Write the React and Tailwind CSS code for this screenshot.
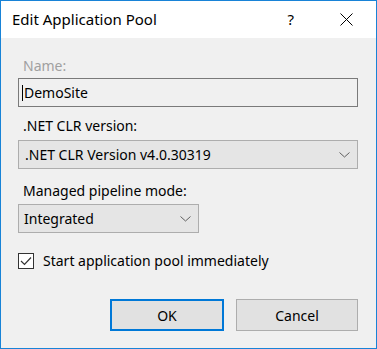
const Chevron = () => (
  <svg width="11" height="6" viewBox="0 0 11 6" className="shrink-0">
    <path d="M0.5 0.5 L5.5 5 L10.5 0.5" fill="none" stroke="#5f5f5f" strokeWidth="1" />
  </svg>
);

const App = () => {
  const font = { fontFamily: '"Noto Sans", "Liberation Sans", sans-serif' };

  return (
    <div
      className="flex h-[349px] w-[377px] flex-col border border-[#1883d7] bg-[#f0f0f0] text-[14px] leading-[19px] text-black"
      style={font}
    >
      <div className="flex h-[37px] shrink-0 items-center bg-white">
        <span className="ml-[11px] text-[15px] leading-none">Edit Application Pool</span>
        <span className="ml-auto mr-[46px] text-[15px] leading-none">?</span>
        <svg width="13" height="13" viewBox="0 0 13 13" className="mr-[23px]">
          <path d="M0.5 0.5 L12.5 12.5 M12.5 0.5 L0.5 12.5" stroke="#000" strokeWidth="1" />
        </svg>
      </div>

      <div className="flex flex-1 flex-col pl-[17px]">
        <label className="mt-[18px] h-[19px] pl-[5px] text-[#a0a0a0]">Name:</label>
        <div className="mt-[3px] flex h-[29px] w-[340px] items-center border border-[#7a7a7a] bg-[#f0f0f0] pl-[3px]">
          <span className="mr-[1px] h-[16px] w-px bg-black" />
          <span>DemoSite</span>
        </div>

        <label className="mt-[9px] h-[19px] pl-[5px]">.NET CLR version:</label>
        <div className="mt-[5px] flex h-[29px] w-[340px] items-center border border-[#adadad] bg-[#e5e5e5] pl-[6px] pr-[7px]">
          <span>.NET CLR Version v4.0.30319</span>
          <span className="ml-auto">
            <Chevron />
          </span>
        </div>

        <label className="mt-[12px] h-[19px] pl-[5px]">Managed pipeline mode:</label>
        <div className="mt-[4px] flex h-[29px] w-[181px] items-center border border-[#adadad] bg-[#e5e5e5] pl-[5px] pr-[7px]">
          <span>Integrated</span>
          <span className="ml-auto">
            <Chevron />
          </span>
        </div>

        <div className="mt-[18px] flex h-[19px] items-center">
          <span className="flex h-[16px] w-[16px] items-center justify-center border border-[#333] bg-white">
            <svg width="12" height="10" viewBox="0 0 12 10">
              <path d="M1 5 L4.5 8.5 L11 1.5" fill="none" stroke="#333" strokeWidth="1.2" />
            </svg>
          </span>
          <span className="ml-[9px]">Start application pool immediately</span>
        </div>

        <div className="mt-[29px] flex gap-[12px] pl-[92px]">
          <button className="h-[32px] w-[114px] border-2 border-[#0078d7] bg-[#e1e1e1]">OK</button>
          <button className="h-[32px] w-[122px] border border-[#adadad] bg-[#e1e1e1]">Cancel</button>
        </div>
      </div>
    </div>
  );
};

export default App;
